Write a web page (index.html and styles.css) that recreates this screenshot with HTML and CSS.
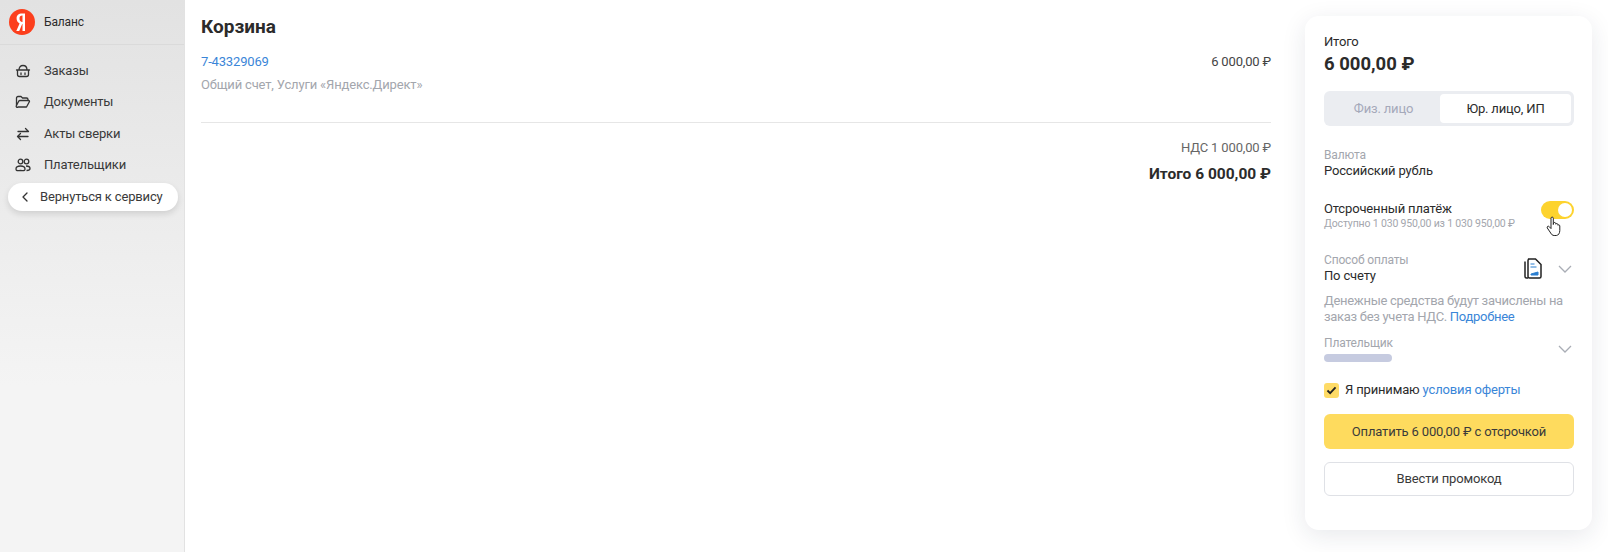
FILE: index.html
```html
<!DOCTYPE html>
<html lang="ru">
  <head>
    <meta charset="UTF-8" />
    <title>Корзина</title>
    <link rel="stylesheet" href="styles.css">
  </head>
  <body>
    <div class="page">
      <aside class="sidebar">
        <div class="brand">
          <svg class="logo" viewBox="0 0 26 26" width="26" height="26">
            <circle cx="13" cy="13" r="13" fill="#fc3f1d"/>
            <path d="M16 22V4.500h-3c-3.400 0-5.400 1.900-5.400 4.900 0 2.300 1.100 3.800 3 5L7.300 22h2.900l3-6.900h.3V22zM13.500 12.900h-.6c-1.700-.6-2.400-1.800-2.400-3.500 0-1.900 1-2.800 2.700-2.800h.3z" fill="#fff" fill-rule="evenodd"/>
          </svg>
          <span>Баланс</span>
        </div>
        <nav class="menu">
          <a class="menu-item">
            <svg viewBox="0 0 16 16" width="16" height="16" fill="none" stroke="#333" stroke-width="1.300"><path d="M1.500 7h13M2.500 7v4.500a2 2 0 0 0 2 2h7a2 2 0 0 0 2-2V7M4 7c0-3 1.500-4.500 4-4.500S12 4 12 7M6 10v1.500M10 10v1.500" stroke-linecap="round"/></svg>
            Заказы
          </a>
          <a class="menu-item">
            <svg viewBox="0 0 16 16" width="16" height="16" fill="none" stroke="#333" stroke-width="1.300"><path d="M1.500 11.500V4a1.500 1.500 0 0 1 1.500-1.500h3l1.500 1.500h4A1.500 1.500 0 0 1 13 5.500V6.500M3 13h8.500l3-5.500a1 1 0 0 0-.9-1H5a1.500 1.500 0 0 0-1.300.8L1.500 11.500A1 1 0 0 0 3 13z" stroke-linejoin="round"/></svg>
            Документы
          </a>
          <a class="menu-item">
            <svg viewBox="0 0 16 16" width="16" height="16" fill="none" stroke="#333" stroke-width="1.300" stroke-linecap="round" stroke-linejoin="round"><path d="M3 5.500h10.500M10.500 2.500l3 3M13 10.500H2.500M5.500 7.500l-3 3 3 3"/></svg>
            Акты сверки
          </a>
          <a class="menu-item">
            <svg viewBox="0 0 16 16" width="16" height="16" fill="none" stroke="#333" stroke-width="1.300"><circle cx="5.500" cy="4.500" r="2.300"/><circle cx="11.500" cy="4.500" r="2.300"/><path d="M1 12c0-2 1.500-3 4.500-3s4.500 1 4.500 3-1 1.500-4.500 1.500S1 14 1 12zM11 9c2.500 0 4 .8 4 2.500 0 1.500-1.500 2-3.500 2"/></svg>
            Плательщики
          </a>
        </nav>
        <a class="back">
          <svg viewBox="0 0 10 12" width="10" height="12" fill="none" stroke="#333" stroke-width="1.300"><path d="M7 2 3 6l4 4" stroke-linecap="round" stroke-linejoin="round"/></svg>
          Вернуться к сервису
        </a>
      </aside>

      <main class="cart">
        <h1>Корзина</h1>
        <div class="order">
          <div>
            <a class="link">7-43329069</a>
            <p class="order-desc">Общий счет, Услуги «Яндекс.Директ»</p>
          </div>
          <span class="order-sum">6 000,00 ₽</span>
        </div>
        <div class="totals">
          <div class="vat">НДС 1 000,00 ₽</div>
          <div class="total">Итого 6 000,00 ₽</div>
        </div>
      </main>

      <section class="card">
        <div class="sum-label">Итого</div>
        <div class="sum">6 000,00 ₽</div>

        <div class="tabs">
          <div class="tab">Физ. лицо</div>
          <div class="tab tab-active">Юр. лицо, ИП</div>
        </div>

        <div class="field">
          <div class="muted">Валюта</div>
          <div>Российский рубль</div>
        </div>

        <div class="deferred">
          <div>
            <div>Отсроченный платёж</div>
            <div class="small">Доступно 1 030 950,00 из 1 030 950,00 ₽</div>
          </div>
          <div class="toggle"><span class="knob"></span></div>
          <svg class="cursor" viewBox="0 0 16 22" width="16" height="22"><path d="M5 2.200c0-1.500 2.300-1.500 2.300 0v6.300l.3-1.400c.4-1 2-.8 2.100.4l.1.700c.3-1 1.900-.9 2 .3l.1.800c.4-.8 1.900-.6 1.900.7v4.500c0 2.500-1.400 5-3.500 5H8.200c-1.700 0-2.700-1-3.500-2.500L1.300 12c-.8-1.400 1-2.500 2-1.300L5 12.600z" fill="#fff" stroke="#222" stroke-width="1" stroke-linejoin="round"/></svg>
        </div>

        <div class="select-row method">
          <div>
            <div class="muted">Способ оплаты</div>
            <div>По счету</div>
          </div>
          <svg class="doc" viewBox="0 0 18 21" width="18" height="21">
            <path d="M1 3.500v15c0 1 .6 1.500 1.500 1.500H4" fill="none" stroke="#222" stroke-width="1.500"/>
            <path d="M4 1h7.500L17 6.500V18.500a1.500 1.500 0 0 1-1.500 1.500H5.500A1.500 1.500 0 0 1 4 18.500V2.500A1.500 1.500 0 0 1 5.500 1z" fill="#fff" stroke="#222" stroke-width="1.500"/>
            <path d="M6.500 6h4M6.500 9h6M7 16l7-2v3H7z" fill="#2a7fd0" stroke="#2a7fd0" stroke-width="1"/>
          </svg>
          <svg class="chevron" viewBox="0 0 14 8" width="14" height="8"><path d="M1 1l6 6 6-6" fill="none" stroke="#a9adb5" stroke-width="1.300"/></svg>
        </div>
        <p class="note muted">Денежные средства будут зачислены на заказ без учета НДС. <a class="link">Подробнее</a></p>

        <div class="select-row payer">
          <div>
            <div class="muted">Плательщик</div>
            <div class="skeleton"></div>
          </div>
          <svg class="chevron" viewBox="0 0 14 8" width="14" height="8"><path d="M1 1l6 6 6-6" fill="none" stroke="#a9adb5" stroke-width="1.300"/></svg>
        </div>

        <div class="accept">
          <span class="checkbox">
            <svg viewBox="0 0 12 10" width="11" height="9"><path d="M1.500 5l3 3 6-6.500" fill="none" stroke="#222" stroke-width="2"/></svg>
          </span>
          <span>Я принимаю <a class="link">условия оферты</a></span>
        </div>

        <button class="btn btn-pay">Оплатить 6 000,00 ₽ с отсрочкой</button>
        <button class="btn btn-promo">Ввести промокод</button>
      </section>
    </div>
  </body>
</html>
```

FILE: styles.css
```css
* {
  box-sizing: border-box;
}
body {
  margin: 0;
  font-family: Roboto, "Noto Sans", sans-serif;
  font-size: 13px;
  line-height: 16px;
  letter-spacing: -0.16px;
  color: #2b2b2b;
  background-color: #fff;
}
a {
  text-decoration: none;
}
p {
  margin: 0;
}
.page {
  display: flex;
  height: 552px;
  overflow: hidden;
}
.link {
  color: #3a86d8;
}
.muted {
  color: #a3a6ad;
}

/* sidebar */
.sidebar {
  flex: 0 0 185px;
  background: linear-gradient(#e2e2e2, #f4f4f4 70%);
  border-right: 1px solid #e2e2e2;
}
.brand {
  display: flex;
  align-items: center;
  gap: 9px;
  height: 45px;
  padding-left: 9px;
  font-size: 12px;
  border-bottom: 1px solid #dadada;
}
.menu {
  padding-top: 10px;
}
.menu-item {
  display: flex;
  align-items: center;
  gap: 13px;
  height: 31.500px;
  padding-left: 15px;
  color: #3a3a3a;
}
.back {
  display: flex;
  align-items: center;
  gap: 10px;
  width: 170px;
  height: 28px;
  margin: 2px 0 0 8px;
  padding-left: 12px;
  background-color: #fff;
  border-radius: 14px;
  box-shadow: 0 3px 6px rgba(0, 0, 0, 0.12);
  color: #3a3a3a;
}

/* cart */
.cart {
  width: 1086px;
  padding: 0 0 0 16px;
}
.cart h1 {
  margin: 16px 0 0;
  font-size: 19px;
  line-height: 22px;
  font-weight: 700;
  letter-spacing: 0;
}
.order {
  display: flex;
  justify-content: space-between;
  padding: 16px 0 29px;
  border-bottom: 1px solid #e6e6e6;
}
.order-desc {
  margin-top: 7px;
  color: #a3a6ad;
}
.order-sum {
  color: #444;
}
.totals {
  padding-top: 17px;
  text-align: right;
}
.vat {
  color: #666;
}
.total {
  margin-top: 8px;
  font-size: 15.500px;
  line-height: 20px;
  font-weight: 700;
  letter-spacing: 0;
}

/* payment card */
.card {
  width: 287px;
  height: 514px;
  margin: 16px 0 0 34px;
  padding: 18px 18px 0 19px;
  background-color: #fff;
  border-radius: 14px;
  box-shadow: 0 6px 24px rgba(30, 40, 70, 0.1);
}
.sum {
  margin-top: 2px;
  font-size: 18.500px;
  line-height: 24px;
  font-weight: 700;
  letter-spacing: 0;
}
.tabs {
  display: flex;
  height: 35px;
  margin-top: 15px;
  padding: 3px;
  background-color: #ebedf1;
  border-radius: 6px;
}
.tab {
  flex: 1;
  display: flex;
  align-items: center;
  justify-content: center;
  color: #a5a9ba;
}
.tab-active {
  flex: 0 0 131px;
  background-color: #fff;
  border-radius: 4px;
  color: #2b2b2b;
}
.field {
  margin-top: 22px;
}
.field .muted {
  font-size: 12px;
  line-height: 15px;
}
.deferred {
  position: relative;
  display: flex;
  justify-content: space-between;
  margin-top: 22px;
}
.small {
  font-size: 10.500px;
  line-height: 14px;
  color: #a3a6ad;
}
.toggle {
  width: 33px;
  height: 18px;
  padding: 2px;
  display: flex;
  justify-content: flex-end;
  background-color: #fdd32e;
  border-radius: 9px;
}
.knob {
  width: 14px;
  height: 14px;
  background-color: #fff;
  border-radius: 50%;
}
.cursor {
  position: absolute;
  left: 222px;
  top: 15px;
}
.select-row {
  display: flex;
  align-items: center;
}
.select-row > div {
  flex: 1;
}
.select-row .muted {
  font-size: 12px;
  line-height: 15px;
}
.method {
  margin-top: 22px;
}
.doc {
  margin-right: 16px;
}
.chevron {
  margin-right: 2px;
}
.note {
  margin-top: 9px;
  letter-spacing: -0.3px;
}
.payer {
  margin-top: 11px;
}
.skeleton {
  width: 68px;
  height: 8px;
  margin-top: 3px;
  background-color: #c6cbe0;
  border-radius: 4px;
}
.accept {
  display: flex;
  align-items: center;
  gap: 6px;
  margin-top: 20px;
}
.checkbox {
  display: flex;
  align-items: center;
  justify-content: center;
  width: 15px;
  height: 15px;
  background-color: #fedb66;
  border-radius: 3px;
}
.btn {
  display: block;
  width: 100%;
  font: inherit;
  letter-spacing: inherit;
  color: #3a3a3a;
  border-radius: 6px;
  text-align: center;
}
.btn-pay {
  height: 35px;
  margin-top: 16px;
  background-color: #fedb5e;
  border: none;
}
.btn-promo {
  height: 34px;
  margin-top: 13px;
  background-color: #fff;
  border: 1px solid #dfe1e6;
}
```
